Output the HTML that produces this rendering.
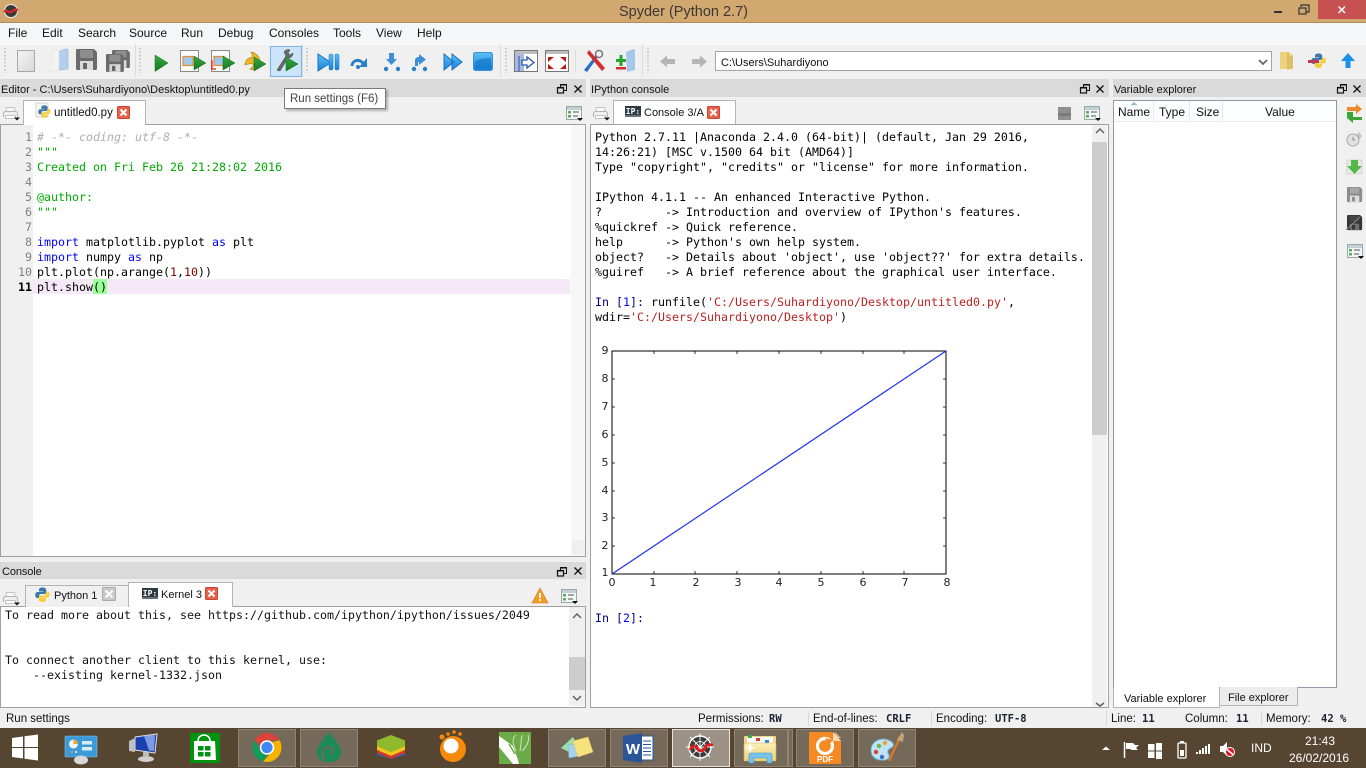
<!DOCTYPE html>
<html><head><meta charset="utf-8"><title>Spyder (Python 2.7)</title>
<style>
html,body{margin:0;padding:0;width:1366px;height:768px;overflow:hidden;background:#f0f0f0}
body{position:relative;font:12px/14px "Liberation Sans",sans-serif;color:#111}
.b,.t,.m{position:absolute}
.t{white-space:nowrap}
.m{white-space:pre;font:11.63px/15px "DejaVu Sans Mono","Liberation Mono",monospace;color:#000}
.dk{background:#dadada;height:18px;top:79px}
.g{color:#00aa00}.k{color:#0000ff}.c{color:#adadad;font-style:italic}.r{color:#800000}
.s{color:#ba2121}.n{color:#000080}
.ln{color:#808080;text-align:right;width:32px;left:0}
.st{font:10.5px/14px "DejaVu Sans Mono",monospace;font-weight:bold;color:#1b2233;top:712px}
.tb{top:729px;width:58px;height:38px;box-sizing:border-box;background:#75695a;border:1px solid #8f8576}
svg{position:absolute;left:0;top:0}
</style></head><body>
<!-- chrome -->
<div class="b" style="left:0;top:0;width:1366px;height:22px;background:#d2a871;border-bottom:1px solid #b08c5c"></div>
<div class="b" style="left:1318px;top:0;width:48px;height:19px;background:#c75050"></div>
<div class="b" style="left:0;top:23px;width:1366px;height:21px;background:#f5f6f7"></div>
<div class="b" style="left:0;top:44px;width:1366px;height:33px;background:#f0f0f0;border-top:1px solid #fafafa"></div>
<div class="b" style="left:270px;top:46px;width:30px;height:29px;background:#cce4f7;border:1px solid #7eb4ea"></div>
<div class="b" style="left:715px;top:51px;width:555px;height:18px;background:#fff;border:1px solid #a5a5a5"></div>
<!-- dock titles -->
<div class="b dk" style="left:0;width:586px"></div>
<div class="b dk" style="left:590px;width:519px"></div>
<div class="b dk" style="left:1113px;width:253px"></div>
<div class="b dk" style="left:0;width:586px;top:562px;height:17px"></div>
<!-- editor -->
<div class="b" style="left:0;top:124px;width:584px;height:431px;background:#fff;border:1px solid #a0a0a0"></div>
<div class="b" style="left:1px;top:125px;width:32px;height:431px;background:#f0f0f0"></div>
<div class="b" style="left:571px;top:125px;width:14px;height:431px;background:#f7f7f7"></div>
<div class="b" style="left:572px;top:540px;width:13px;height:15px;background:#efefef"></div>
<div class="b" style="left:33px;top:279px;width:537px;height:15px;background:#f5e9f7"></div>
<div class="b" style="left:93px;top:279px;width:14px;height:15px;background:#99ff99"></div>
<!-- tabs -->
<div class="b" style="left:23px;top:100px;width:121px;height:24px;background:#fff;border:1px solid #b4b4b4;border-bottom:0"></div>
<div class="b" style="left:613px;top:100px;width:121px;height:24px;background:#fff;border:1px solid #b4b4b4;border-bottom:0"></div>
<!-- console pane -->
<div class="b" style="left:0;top:606px;width:584px;height:100px;background:#fff;border:1px solid #a0a0a0"></div>
<div class="b" style="left:569px;top:607px;width:16px;height:99px;background:#f0f0f0"></div>
<div class="b" style="left:569px;top:657px;width:16px;height:33px;background:#cdcdcd"></div>
<div class="b" style="left:25px;top:585px;width:102px;height:21px;background:#f0f0f0;border:1px solid #b4b4b4;border-bottom:0"></div>
<div class="b" style="left:128px;top:582px;width:103px;height:24px;background:#fff;border:1px solid #b4b4b4;border-bottom:0"></div>
<!-- ipython pane -->
<div class="b" style="left:590px;top:124px;width:517px;height:582px;background:#fff;border:1px solid #a0a0a0"></div>
<div class="b" style="left:1092px;top:125px;width:15px;height:582px;background:#f0f0f0"></div>
<div class="b" style="left:1092px;top:142px;width:15px;height:293px;background:#cdcdcd"></div>
<!-- variable explorer -->
<div class="b" style="left:1113px;top:100px;width:222px;height:586px;background:#fff;border:1px solid #8f98a5"></div>
<div class="b" style="left:1114px;top:101px;width:222px;height:20px;background:#fcfdfe;border-bottom:1px solid #e4edf6"></div>
<div class="b" style="left:1153px;top:101px;width:1px;height:20px;background:#e4edf6"></div>
<div class="b" style="left:1189px;top:101px;width:1px;height:20px;background:#e4edf6"></div>
<div class="b" style="left:1222px;top:101px;width:1px;height:20px;background:#e4edf6"></div>
<div class="b" style="left:1113px;top:687px;width:105px;height:20px;background:#fff;border:1px solid #b4b4b4;border-top:0"></div>
<div class="b" style="left:1219px;top:687px;width:77px;height:18px;background:#ececec;border:1px solid #b4b4b4;border-top:0"></div>
<!-- status + taskbar -->
<div class="b" style="left:0;top:708px;width:1366px;height:20px;background:#f0f0f0"></div>
<div class="b" style="left:808px;top:711px;width:1px;height:15px;background:#d8d8d8"></div>
<div class="b" style="left:931px;top:711px;width:1px;height:15px;background:#d8d8d8"></div>
<div class="b" style="left:1106px;top:711px;width:1px;height:15px;background:#d8d8d8"></div>
<div class="b" style="left:1261px;top:711px;width:1px;height:15px;background:#d8d8d8"></div>
<div class="b" style="left:0;top:728px;width:1366px;height:40px;background:#554531"></div>
<div class="b tb" style="left:238px"></div><div class="b tb" style="left:300px"></div>
<div class="b tb" style="left:548px"></div><div class="b tb" style="left:610px"></div>
<div class="b tb" style="left:672px;background:#9b9184;border-color:#e8e5e0"></div>
<div class="b tb" style="left:734px;width:54px"></div><div class="b tb" style="left:788px;width:5px"></div>
<div class="b tb" style="left:796px"></div><div class="b tb" style="left:858px"></div>

<svg width="1366" height="768" viewBox="0 0 1366 768">
<defs>
<linearGradient id="gd" x1="0" y1="0" x2="0" y2="1"><stop offset="0" stop-color="#3ba843"/><stop offset="1" stop-color="#137a20"/></linearGradient>
<linearGradient id="bl" x1="0" y1="0" x2="0" y2="1"><stop offset="0" stop-color="#5cc0f5"/><stop offset="1" stop-color="#1b80d8"/></linearGradient>
<linearGradient id="nf" x1="0" y1="0" x2="1" y2="1"><stop offset="0" stop-color="#f4f4f4"/><stop offset="1" stop-color="#d8d8d8"/></linearGradient>
<linearGradient id="fo" x1="0" y1="0" x2="0" y2="1"><stop offset="0" stop-color="#fbeeb4"/><stop offset="1" stop-color="#eed17e"/></linearGradient>
<g id="opt"><rect x=".5" y=".5" width="15" height="13" fill="#f2f6f6" stroke="#9aa8ad"/><rect x="1" y="1" width="14" height="3" fill="#c3d0d4"/><rect x="2" y="5" width="3" height="2.5" fill="#5cab58"/><rect x="2" y="9" width="3" height="2.5" fill="#5cab58"/><path d="M7 6h6M7 10h5" stroke="#555" fill="none"/><path d="M11 12h6l-3 3z" fill="#111"/></g>
<g id="print"><path d="M3 6V2.500a1 1 0 0 1 1-1h7a1 1 0 0 1 1 1V6" fill="#f7f7f7" stroke="#c4c4c4"/><path d="M.5 11V7.500a2 2 0 0 1 2-2h10a2 2 0 0 1 2 2V11" fill="#f0f0f0" stroke="#b4b4b4"/><rect x="2.500" y="9.500" width="10" height="3" fill="#fff" stroke="#c4c4c4"/><path d="M11 11.500h6l-3 3z" fill="#111"/></g>
<g id="xr"><rect x=".5" y=".5" width="12" height="12" rx="1" fill="#e8614a" stroke="#c9452f"/><path d="M3.500 3.500l6 6M9.500 3.500l-6 6" stroke="#fff" stroke-width="2" fill="none"/></g>
<g id="dock"><path d="M3.500 3V.5h6v6H7" fill="none" stroke="#111"/><rect x=".5" y="3.500" width="6" height="5.500" fill="none" stroke="#111" stroke-width="1.200"/><path d="M1 4h5M4 1h5" stroke="#111"/></g>
<path id="cls" d="M.5.5l7 7M7.500.5l-7 7" stroke="#111" stroke-width="1.300" fill="none"/>
<g id="py"><path d="M7.500.5C4.500.5 4 1.800 4 3v1.500h4V5H2.500C1 5 .3 6.300.3 8s.8 3 2.200 3H4V9c0-1.300 1-2 2.200-2h3.300c1 0 1.700-.8 1.700-1.700V3C11.200 1.500 9.800.5 7.500.5z" fill="#3b77a8"/><path d="M7.500 15c3 0 3.500-1.300 3.500-2.500V11H7v-.5h5.500c1.500 0 2.200-1.300 2.200-3s-.8-3-2.200-3H11v2c0 1.300-1 2-2.200 2H5.500c-1 0-1.700.8-1.700 1.700v2.300C3.800 14 5.200 15 7.500 15z" fill="#f6cf3d"/></g>
<g id="ip"><rect width="16" height="11" fill="#2c3a45"/><rect y="9" width="16" height="2" fill="#66727a"/><text x="8" y="8" font-family="DejaVu Sans Mono,monospace" font-size="8" font-weight="bold" fill="#fff" text-anchor="middle">IP:</text></g>
<g id="fl"><path d="M0 1.500A1.500 1.500 0 0 1 1.500 0H18l3 3v16.500a1.500 1.500 0 0 1-1.500 1.500h-18A1.500 1.500 0 0 1 0 19.500z" fill="#6a6a6a"/><rect x="4" y="1" width="13" height="8" fill="#8e8e8e"/><rect x="4" y="12" width="13" height="9" fill="#dadada"/><rect x="7" y="14" width="4" height="6" fill="#666"/></g>
<path id="tri" d="M0 0l12 7-12 7z" fill="url(#gd)" stroke="#126e1c" stroke-width=".5"/>
</defs>

<!-- spyder logo title -->
<circle cx="11" cy="11" r="6.500" fill="#3a3a3a" stroke="#eee" stroke-width="1"/><path d="M4 12c3-4 4 2 7 0s3-3 7-2" stroke="#d9262a" stroke-width="2.200" fill="none"/>
<!-- window controls -->
<rect x="1274" y="11" width="8" height="2" fill="#333"/>
<rect x="1299" y="8" width="7" height="6" fill="none" stroke="#333" stroke-width="1.200"/><path d="M1301 7V5h8v7h-3" fill="none" stroke="#333" stroke-width="1.200"/>
<path d="M1338.500 6.500l6.500 6.500M1345 6.500l-6.500 6.500" stroke="#fff" stroke-width="1.400"/>

<!-- grips / separators -->
<path d="M5 48v25M140 48v25M307 48v25M506 48v25M648 48v25" stroke="#bcbcbc" stroke-dasharray="1.500 2" stroke-width="1.500"/>
<path d="M135.500 44v33M302.500 44v33M500.500 44v33M642.500 44v33M575.500 49v24" stroke="#dcdcdc"/>

<!-- file tools -->
<rect x="17.500" y="50.500" width="17" height="21" fill="url(#nf)" stroke="#a8a8a8"/>
<path d="M57 68V54c0-1 5-5 10-5 1 0 1 1 1 2v18l-9 1z" fill="#b4cfee" stroke="#8fb0d2" stroke-width=".6"/><path d="M52 50l7 1 0 19-12 1c3-3 4-5 5-8z" fill="#f3f3f3" stroke="#ddd" stroke-width=".5"/>
<use href="#fl" x="76" y="49"/>
<use href="#fl" transform="translate(112 50) scale(.85)"/><use href="#fl" transform="translate(106 54) scale(.85)"/>
<!-- run tools -->
<path d="M155 55l13 8-13 8.500z" fill="url(#gd)" stroke="#126e1c" stroke-width=".5"/>
<rect x="180.500" y="50.500" width="18" height="21" fill="#fafafa" stroke="#8a8a8a"/><rect x="183" y="56.500" width="10" height="9" fill="#9dc7ec" stroke="#ef8a2c" stroke-width="1.200"/><use href="#tri" x="194" y="56"/>
<rect x="211.500" y="50.500" width="18" height="21" fill="#fafafa" stroke="#8a8a8a"/><rect x="214" y="56.500" width="10" height="9" fill="#9dc7ec" stroke="#ef8a2c" stroke-width="1.200"/><path d="M212 60v9h4" fill="none" stroke="#e2231a" stroke-width="1.200"/><use href="#tri" x="223" y="56"/>
<path d="M245 65c0-6 4-7 8-8l-2-5c6 1 9 6 9 10 0 6-6 9-10 7 2-1 4-3 3-5-2-1-5 0-8 1z" fill="#eab728" stroke="#b88a12" stroke-width=".7"/><use href="#tri" x="254" y="57"/>
<path d="M277 70l9-14-2-4c1-2 4-3 6-2l-2 3 2 2 3-2c0 3-2 5-5 5l-8 13z" fill="#6b6b6b" stroke="#333" stroke-width=".5"/><use href="#tri" x="286" y="57"/>
<!-- debug -->
<path d="M318 54l13 8.500-13 8.500z" fill="url(#bl)" stroke="#1873c4"/><rect x="329" y="54" width="4" height="16" rx="1.500" fill="url(#bl)" stroke="#1873c4" stroke-width=".5"/><rect x="335" y="54" width="4" height="16" rx="1.500" fill="url(#bl)" stroke="#1873c4" stroke-width=".5"/>
<path d="M352 66c0-5 6-8 11-3" fill="none" stroke="#2a7fc9" stroke-width="3"/><path d="M367 58v9h-8z" fill="#2a7fc9"/><circle cx="358" cy="67" r="2" fill="#2a7fc9"/>
<path d="M389 53h5v6h3l-5.500 6-5.500-6h3z" fill="#3d90d8"/><circle cx="386" cy="69" r="2.200" fill="#2a7fc9"/><circle cx="398" cy="69" r="2.200" fill="#2a7fc9"/>
<path d="M415 66v-6c0-2 2-3 4-3v-3l7 5.500-7 5.500v-3c-1 0-1 0-1 1v3z" fill="#3d90d8"/><circle cx="414" cy="69" r="2.200" fill="#2a7fc9"/><circle cx="425" cy="69" r="2.200" fill="#2a7fc9"/>
<path d="M444 54l10 8-10 8zM452 54l10 8-10 8z" fill="url(#bl)" stroke="#1873c4"/>
<rect x="473.500" y="52.500" width="19" height="18" rx="2" fill="url(#bl)" stroke="#3591da"/><path d="M475 62c5-4 12-4 16-4v11h-16z" fill="#0f74c8" opacity=".6"/>
<!-- maximize etc -->
<rect x="514.500" y="50.500" width="23" height="21" fill="#fff" stroke="#777"/><rect x="515" y="51" width="22" height="3" fill="#bdbdbd"/><rect x="515" y="54" width="9" height="17" fill="#aab9de"/><path d="M522 60h5v-3l7 5.500-7 5.500v-3h-5z" fill="#fff" stroke="#2855b0" stroke-width="1.300"/><path d="M519 56v15" stroke="#2855b0"/>
<rect x="545.500" y="50.500" width="23" height="21" fill="#fff" stroke="#777"/><rect x="546" y="51" width="22" height="3" fill="#bdbdbd"/><path d="M548 57l6 0-6 5zM566 57h-6l6 5zM548 69h6l-6-5zM566 69h-6l6-5z" fill="#c01616"/>
<path d="M584 70l12-15 2 2-11 15z" fill="#2a70c8"/><path d="M602 71l-15-18 2-3 16 18z" fill="#d22f2a"/><circle cx="599" cy="54" r="3.500" fill="none" stroke="#777" stroke-width="1.500"/>
<path d="M626 52l7-3 2 1v20l-8 2z" fill="#a5c8ea"/><rect x="616" y="59" width="10" height="3" fill="#25a52c"/><rect x="619.500" y="55" width="3" height="11" fill="#25a52c"/><rect x="616" y="67" width="10" height="2.500" fill="#d22f2a"/>
<!-- nav -->
<path d="M660 61.500l7-6v3.500h8v5h-8v3.500z" fill="#b5b5b5"/><path d="M707 61.500l-7-6v3.500h-8v5h8v3.500z" fill="#b5b5b5"/>
<path d="M1259 60l4 4 4-4" fill="none" stroke="#666" stroke-width="1.800"/>
<path d="M1280 52h8l5 3v14h-13z" fill="#ecd27a"/><path d="M1288 52v18" stroke="#c9a94e"/><rect x="1288" y="56" width="5" height="13" fill="#dcc069"/>
<use href="#py" x="1311" y="53"/><path d="M1308 60h11v3h-11z" fill="#c0394e"/>
<path d="M1348 53l7 8h-4.500v7h-5v-7H1341z" fill="#1a90e8"/>

<!-- dock icons -->
<use href="#dock" x="557" y="84"/><use href="#cls" x="574" y="85"/>
<use href="#dock" x="1080" y="84"/><use href="#cls" x="1096" y="85"/>
<use href="#dock" x="1337" y="84"/><use href="#cls" x="1353" y="85"/>
<use href="#dock" x="557" y="567"/><use href="#cls" x="574" y="567"/>

<!-- tab icons -->
<use href="#print" x="3" y="106"/><use href="#print" x="593" y="106"/><use href="#print" x="3" y="591"/>
<use href="#opt" x="566" y="106"/><use href="#opt" x="1084" y="106"/><use href="#opt" x="561" y="589"/><use href="#opt" x="1347" y="244"/>
<rect x="36" y="103" width="12" height="14" fill="#f4f4f4" stroke="#c4c4c4" stroke-width=".7"/><use href="#py" transform="translate(38 105) scale(.85)"/>
<use href="#xr" x="117" y="106"/><use href="#xr" x="707" y="106"/><use href="#xr" x="205" y="587"/>
<g transform="translate(102 587)"><rect x=".5" y=".5" width="13" height="13" rx="1" fill="#c9c9c9" stroke="#aaa"/><path d="M3.500 3.500l7 7M10.500 3.500l-7 7" stroke="#fff" stroke-width="2"/></g>
<use href="#ip" x="625" y="106"/><use href="#ip" x="142" y="588"/>
<use href="#py" x="35" y="587"/>
<rect x="1058" y="107" width="13" height="13" fill="#8f8f8f"/><rect x="1058" y="113" width="13" height="3" fill="#7a7a7a"/>
<path d="M540 588l8 15h-16z" fill="#f59a23" stroke="#d9791a" stroke-width=".6"/><rect x="539" y="593" width="2" height="5" fill="#fff"/><rect x="539" y="599" width="2" height="2" fill="#fff"/>
<!-- console scrollbar arrows -->
<path d="M573 618l4-4 4 4M573 696l4 4 4-4M1096 133l4-4 4 4M1096 703l4 3 4-3" fill="none" stroke="#606060" stroke-width="1.500"/>
<!-- sort arrow -->
<path d="M1134 102l3.500 3h-7z" fill="#8eb8d8"/>
<!-- var explorer tools -->
<path d="M1347 107h9v-3l6 5-6 5v-3h-9z" fill="#ec8a2a"/><path d="M1347 112l6-0 0-2v7h9v3h-9v3l-6-5z" fill="#3aa838"/>
<g fill="#c6c6c6"><path d="M1349 134h9v-3l4 5-4 5v-2h-9z"/><circle cx="1353" cy="140" r="6" fill="#e2e2e2" stroke="#aaa"/><path d="M1353 137v3h2" stroke="#888" fill="none"/></g>
<rect x="1347" y="160" width="15" height="14" fill="#e8e8e8" stroke="#ccc" stroke-width=".7"/><path d="M1351 160h7v6h4l-7.500 8-7.500-8h4z" fill="#52b848"/>
<g transform="translate(1347 187) scale(.72)"><use href="#fl" opacity=".75"/></g>
<g transform="translate(1347 215) scale(.72)"><use href="#fl" style="filter:brightness(.5)"/></g><path d="M1346 230l14-13" stroke="#888"/>

<!-- plot -->
<rect x="612" y="351" width="334" height="223" fill="#fff" stroke="#000" stroke-width="1"/>
<path d="M612 574L946 351" stroke="#2233ee" stroke-width="1.200" fill="none"/>
<path d="M654 351v3M695 351v3M737 351v3M779 351v3M821 351v3M863 351v3M904 351v3M654 574v-3M695 574v-3M737 574v-3M779 574v-3M821 574v-3M863 574v-3M904 574v-3M612 379h3M612 407h3M612 435h3M612 463h3M612 491h3M612 518h3M612 546h3M946 379h-3M946 407h-3M946 435h-3M946 463h-3M946 491h-3M946 518h-3M946 546h-3" stroke="#000" stroke-width=".8"/>
<g font-family="DejaVu Sans,sans-serif" font-size="11" fill="#222" text-anchor="middle">
<text x="605" y="354">9</text><text x="605" y="382">8</text><text x="605" y="410">7</text><text x="605" y="438">6</text><text x="605" y="466">5</text><text x="605" y="494">4</text><text x="605" y="521">3</text><text x="605" y="549">2</text><text x="605" y="576">1</text>
<text x="612" y="586">0</text><text x="653" y="586">1</text><text x="696" y="586">2</text><text x="738" y="586">3</text><text x="779" y="586">4</text><text x="821" y="586">5</text><text x="863" y="586">6</text><text x="905" y="586">7</text><text x="947" y="586">8</text>
</g>

<!-- taskbar icons -->
<path d="M12 738l11-1.500V747H12zM24.500 736.300L38 734.500V747H24.500zM12 748h11v10.500L12 757zM24.500 748H38v12.500L24.500 758.700z" fill="#fff"/>
<rect x="65" y="736" width="32" height="21" rx="1" fill="#3d9ad8" stroke="#84c4ea" stroke-width=".6"/><circle cx="73.500" cy="744" r="4.500" fill="#eef6fb"/><path d="M73.500 744v-4.500a4.500 4.500 0 0 1 4.500 4.500z" fill="#f3a02d"/><rect x="82" y="741" width="10" height="3.500" fill="#d7ecf9"/><rect x="82" y="747" width="10" height="3.500" fill="#d7ecf9"/><circle cx="72" cy="752" r="1" fill="#f3a02d"/><circle cx="76" cy="752" r="1" fill="#fff"/><ellipse cx="81" cy="760" rx="7" ry="4.500" fill="#d8d8d8"/>
<path d="M135 737l22-3-2 19-20-3z" fill="#1a3fb0" stroke="#e2e2e2"/><path d="M144 736l11-1-1 16-5-.5z" fill="#7d9be0"/><path d="M129 741l6-3v14l-6-1z" fill="#c0c0c0"/><rect x="143" y="752" width="6" height="4" fill="#bbb"/><ellipse cx="146" cy="759" rx="8" ry="3" fill="#cfcfcf"/>
<rect x="190" y="733" width="30" height="30" fill="#00930f"/><path d="M194 741h21l1 19h-22z" fill="#fff"/><path d="M198 741c0-8 12-8 12 0" fill="none" stroke="#fff" stroke-width="1.600"/><path d="M198 746h5.500v4.500H198zM205 746h5.500v4.500H205zM198 752h5.500v4.500H198zM205 752h5.500v4.500H205z" fill="#00930f"/>
<path d="M267 733a14.500 14.500 0 0 1 12.600 7.300H267a7.200 7.200 0 0 0-6.800 4.600l-5.700-4.800A14.500 14.500 0 0 1 267 733z" fill="#db4437"/>
<path d="M254.500 740.200l6.400 10.900A7.200 7.200 0 0 0 267 754.700l-3.900 6.800A14.500 14.500 0 0 1 254.500 740.200z" fill="#0f9d58"/>
<path d="M279.600 740.300A14.500 14.500 0 0 1 267 762l-3.900-.5 6.900-8a7.200 7.200 0 0 0 1.500-11.200z" fill="#f4b400"/>
<circle cx="267" cy="747.500" r="7.200" fill="#fff"/><circle cx="267" cy="747.500" r="5.600" fill="#4285f4"/>
<path d="M329 732c-6 8-12 14-12 20 0 7 5 10 12 10s12-3 12-10c0-6-6-12-12-20z" fill="#1c8a55"/><path d="M325 760c-6-7-1-14 5-13 4 1 4 6 0 6" fill="none" stroke="#75695a" stroke-width="1.800"/><circle cx="332" cy="748" r=".8" fill="#75695a"/>
<path d="M391 735l13 5c1 0 1 1 1 2v4l-14 6-14-6v-4c0-1 0-2 1-2z" fill="#8fba2c"/><path d="M377 746l14 6 14-6v4l-14 6-14-6z" fill="#f0c419"/><path d="M377 750l14 6 14-6v3l-14 6-14-6z" fill="#d8332c"/><path d="M377 753l14 6 14-6v2l-14 4-14-4z" fill="#2368bd"/>
<circle cx="453" cy="749" r="13" fill="#f58a0a"/><circle cx="451" cy="746" r="7.500" fill="#fff"/><circle cx="448" cy="734" r="1.800" fill="#f58a0a"/><circle cx="454" cy="732" r="1.800" fill="#f58a0a"/><circle cx="460" cy="734" r="1.800" fill="#f58a0a"/><circle cx="442" cy="737" r="2.500" fill="#f58a0a"/>
<rect x="499" y="732" width="32" height="32" fill="#6bab48"/><path d="M499 736l14 10 5 14 1 4h-6l-14-17z" fill="#fff"/><path d="M509 744l6 10" stroke="#6bab48" stroke-width="1.500"/><path d="M516 735c-4 3-4 8 0 16M522 735c-1 5-1 10-2 16M528 735c2 5-1 11-6 16" stroke="#cfe0b8" fill="none"/>
<path d="M561 748l12-11 7 13-7 4z" fill="#9fdca8"/><path d="M568 745l10-1 1 12-10 2z" fill="#a5d2ef" stroke="#7ab8e2" stroke-width=".5"/><path d="M573 741l15-4 5 15-15 5z" fill="#f7e37d" stroke="#e3c94f" stroke-width=".5"/>
<path d="M641 736h12v24h-12z" fill="#fff" stroke="#2a5699"/><path d="M643 741h8M643 744.500h8M643 748h8M643 751.500h8M643 755h8" stroke="#2a5699"/><path d="M623 736l19-3v30l-19-3z" fill="#2a5699"/>
<text x="633" y="754" font-family="Liberation Sans,sans-serif" font-size="15" font-weight="bold" fill="#fff" text-anchor="middle">W</text>
<circle cx="700" cy="747" r="10.500" fill="#3a3a3a"/><path d="M700 733v28M686 747h28M690 737l20 20M710 737l-20 20" stroke="#fff" stroke-width=".9"/><circle cx="700" cy="747" r="11" fill="none" stroke="#fff" stroke-width="1.400"/><circle cx="700" cy="747" r="5.500" fill="none" stroke="#fff" stroke-width=".8"/><path d="M690 750c3-6 6-4 8-1s6 2 7-1 3-4 8-3" stroke="#e01f1f" stroke-width="2.800" fill="none"/>
<path d="M744 737a1 1 0 0 1 1-1h30a1 1 0 0 1 1 1v24h-32z" fill="#efd78a"/><rect x="747" y="737" width="26" height="6" fill="#fff"/><rect x="748" y="735" width="4" height="3" fill="#30b040"/><rect x="756" y="738" width="4" height="3" fill="#d83a2a"/><rect x="765" y="740" width="4" height="3" fill="#2a8ad8"/><path d="M744 743h32v18h-32z" fill="url(#fo)" stroke="#cfb058" stroke-width=".6"/><path d="M749 763v-8a2 2 0 0 1 2-2h19a2 2 0 0 1 2 2v8h-5v-5h-13v5z" fill="#79c4ea" stroke="#3c95c8" stroke-width=".6"/><path d="M750 743l2 4 4 1-4 1-2 4-2-4-4-1 4-1z" fill="#fff" opacity=".85"/>
<path d="M809 732h23l9 9v23h-32z" fill="#f58a22"/><path d="M835 732l6 6h-6z" fill="#f8b27a"/><path d="M833 732v9h8z" fill="#fdd9b5"/><circle cx="825" cy="746" r="7.500" fill="none" stroke="#fff" stroke-width="3.200"/><path d="M825 738l8 2-4 5z" fill="#f58a22"/>
<text x="825" y="762" font-family="Liberation Sans,sans-serif" font-size="8" font-weight="bold" fill="#fff" text-anchor="middle">PDF</text>
<path d="M871 750c0-8 9-13 17-10 6 2 7 6 3 8-5 2-3 5-2 7 1 3-2 6-8 5-6 0-10-4-10-10z" fill="#bfe3f4" stroke="#6eb2d6"/><circle cx="879" cy="746" r="2.200" fill="#7ab04a"/><circle cx="885" cy="743" r="2.200" fill="#e8a33a"/><circle cx="876" cy="752" r="2.200" fill="#d8442a"/><circle cx="882" cy="757" r="2.200" fill="#3a70c0"/>
<path d="M889 761l11-24" stroke="#d8762a" stroke-width="2.500"/><path d="M897 740l5-8 2 3-1 7z" fill="#c9a070"/>

<!-- tray -->
<path d="M1102 750l4-3.500 4 3.500z" fill="#fff"/>
<path d="M1124.500 742v16" stroke="#fff" stroke-width="1.500"/><path d="M1126 743h7l2 2h4l-3 3 2 2h-6l-2-1h-4z" fill="#fff"/>
<path d="M1148 744h6.500v6.500H1148zM1156 743h6v7.500h-6zM1148 751.500h6.500v6.500H1148zM1156 751.500h6v7.500h-6z" fill="#fff"/>
<rect x="1178" y="743" width="8" height="15" rx="1" fill="none" stroke="#fff" stroke-width="1.300"/><rect x="1180" y="750" width="4" height="6" fill="#fff"/><rect x="1180" y="741" width="4" height="2" fill="#fff"/>
<path d="M1196 752h2v2h-2zM1199 750h2v4h-2zM1202 748h2v6h-2zM1205 746h2v8h-2zM1208 744h2v10h-2z" fill="#fff"/>
<path d="M1220 746h3l4-4v14l-4-4h-3z" fill="#fff"/><circle cx="1230" cy="752" r="4.500" fill="#e0162b" stroke="#fff"/><path d="M1227 749.500l6 5" stroke="#fff" stroke-width="1.500"/>
</svg>

<!-- TEXT -->
<div class="t" style="left:619px;top:4px;font-size:14.5px;line-height:17px;color:#3c3832">Spyder (Python 2.7)</div>
<div class="t" style="left:8px;top:26px">File</div><div class="t" style="left:42px;top:26px">Edit</div><div class="t" style="left:78px;top:26px">Search</div><div class="t" style="left:129px;top:26px">Source</div><div class="t" style="left:181px;top:26px">Run</div><div class="t" style="left:218px;top:26px">Debug</div><div class="t" style="left:269px;top:26px">Consoles</div><div class="t" style="left:333px;top:26px">Tools</div><div class="t" style="left:376px;top:26px">View</div><div class="t" style="left:417px;top:26px">Help</div>
<div class="t" style="left:721px;top:56px;font-size:11px">C:\Users\Suhardiyono</div>
<div class="t" style="left:1px;top:83px;font-size:11px">Editor - C:\Users\Suhardiyono\Desktop\untitled0.py</div>
<div class="t" style="left:591px;top:83px;font-size:11px">IPython console</div>
<div class="t" style="left:1114px;top:83px;font-size:11px">Variable explorer</div>
<div class="b" style="left:284px;top:88px;width:100px;height:19px;background:#fff;border:1px solid #7a7a7a;box-shadow:2px 2px 2px rgba(0,0,0,.25)"></div>
<div class="t" style="left:290px;top:92px;font-size:11.5px;color:#444">Run settings (F6)</div>
<div class="t" style="left:54px;top:106px;font-size:11.5px">untitled0.py</div>
<div class="t" style="left:644px;top:106px;font-size:11px">Console 3/A</div>
<div class="t" style="left:54px;top:589px;font-size:11px">Python 1</div>
<div class="t" style="left:161px;top:588px;font-size:11px">Kernel 3</div>
<div class="t" style="left:2px;top:565px;font-size:11px;letter-spacing:-.1px">Console</div>
<div class="t" style="left:1118px;top:105px">Name</div><div class="t" style="left:1159px;top:105px">Type</div><div class="t" style="left:1196px;top:105px">Size</div><div class="t" style="left:1265px;top:105px">Value</div>
<div class="t" style="left:1124px;top:692px;font-size:11px">Variable explorer</div>
<div class="t" style="left:1228px;top:691px;font-size:11px">File explorer</div>

<!-- editor code -->
<div class="m ln" style="top:130px">1
2
3
4
5
6
7
8
9
10
<b style="color:#000">11</b></div>
<div class="m" style="left:37px;top:130px"><span class="c"># -*- coding: utf-8 -*-</span>
<span class="g">"""</span>
<span class="g">Created on Fri Feb 26 21:28:02 2016</span>

<span class="g">@author:</span>
<span class="g">"""</span>

<span class="k">import</span> matplotlib.pyplot <span class="k">as</span> plt
<span class="k">import</span> numpy <span class="k">as</span> np
plt.plot(np.arange(<span class="r">1</span>,<span class="r">10</span>))
plt.show()</div>

<!-- console text -->
<div class="m" style="left:5px;top:608px;color:#111">To read more about this, see https://github.com/ipython/ipython/issues/2049


To connect another client to this kernel, use:
    --existing kernel-1332.json</div>

<!-- ipython text -->
<div class="m" style="left:595px;top:130px">Python 2.7.11 |Anaconda 2.4.0 (64-bit)| (default, Jan 29 2016,
14:26:21) [MSC v.1500 64 bit (AMD64)]
Type "copyright", "credits" or "license" for more information.

IPython 4.1.1 -- An enhanced Interactive Python.
?         -> Introduction and overview of IPython's features.
%quickref -> Quick reference.
help      -> Python's own help system.
object?   -> Details about 'object', use 'object??' for extra details.
%guiref   -> A brief reference about the graphical user interface.

<span class="n">In [</span><span class="k">1</span><span class="n">]:</span> runfile(<span class="s">'C:/Users/Suhardiyono/Desktop/untitled0.py'</span>,
wdir=<span class="s">'C:/Users/Suhardiyono/Desktop'</span>)</div>
<div class="m" style="left:595px;top:611px"><span class="n">In [</span><span class="k">2</span><span class="n">]:</span></div>

<!-- status -->
<div class="t" style="left:6px;top:712px;font-size:11.5px">Run settings</div>
<div class="t" style="left:698px;top:712px;font-size:11.5px">Permissions:</div><div class="t st" style="left:769px">RW</div>
<div class="t" style="left:813px;top:712px;font-size:11.5px">End-of-lines:</div><div class="t st" style="left:886px">CRLF</div>
<div class="t" style="left:936px;top:712px;font-size:11.5px">Encoding:</div><div class="t st" style="left:995px">UTF-8</div>
<div class="t" style="left:1111px;top:712px;font-size:11.5px">Line:</div><div class="t st" style="left:1142px">11</div>
<div class="t" style="left:1185px;top:712px;font-size:11.5px">Column:</div><div class="t st" style="left:1236px">11</div>
<div class="t" style="left:1266px;top:712px;font-size:11.5px">Memory:</div><div class="t st" style="left:1321px">42 %</div>
<!-- tray text -->
<div class="t" style="left:1251px;top:741px;color:#fff">IND</div>
<div class="t" style="left:1305px;top:734px;color:#fff">21:43</div>
<div class="t" style="left:1289px;top:751px;color:#fff">26/02/2016</div>
</body></html>
